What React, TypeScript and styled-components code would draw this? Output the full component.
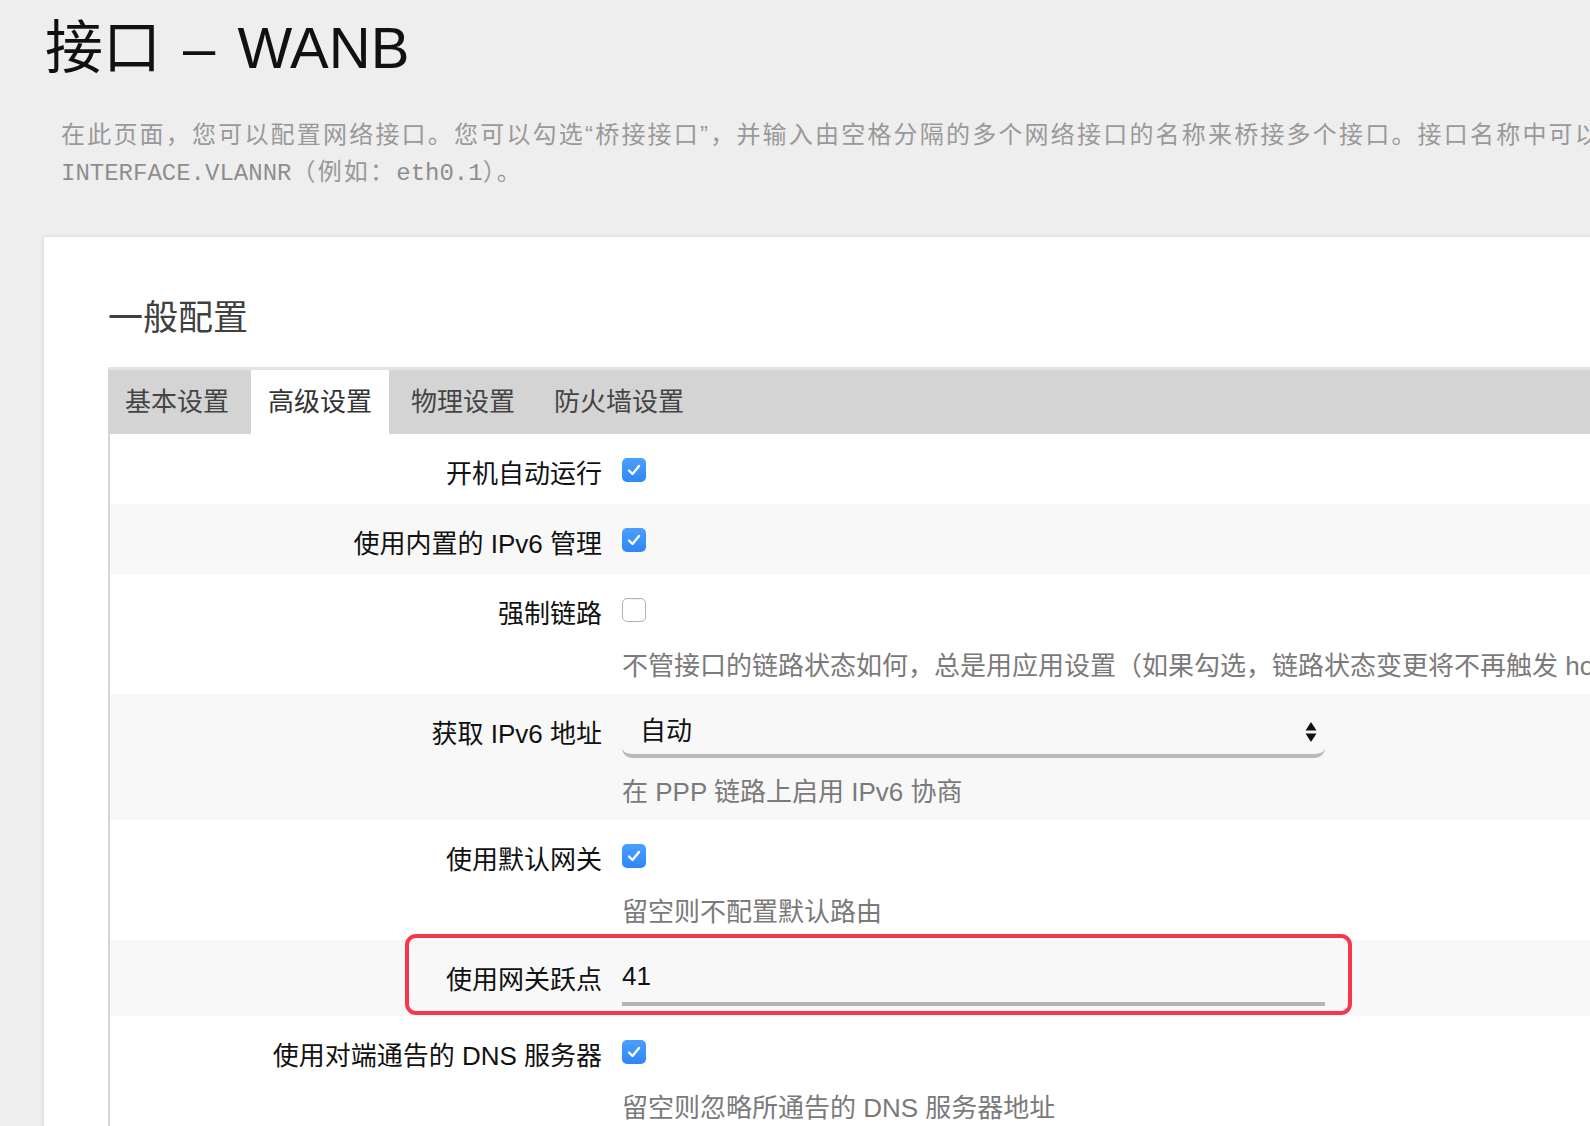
import React from 'react'
import styled, { createGlobalStyle } from 'styled-components'

const sans = `"Liberation Sans", "Noto Sans CJK SC", sans-serif`

type Field = {
  label: string
  kind: 'check' | 'select' | 'input'
  checked?: boolean
  value?: string
  hint?: string
  marked?: boolean
}

const tabs = ['基本设置', '高级设置', '物理设置', '防火墙设置']

const fields: Field[] = [
  { label: '开机自动运行', kind: 'check', checked: true },
  { label: '使用内置的 IPv6 管理', kind: 'check', checked: true },
  {
    label: '强制链路',
    kind: 'check',
    checked: false,
    hint: '不管接口的链路状态如何，总是用应用设置（如果勾选，链路状态变更将不再触发 hotplug 事件处理程序）',
  },
  { label: '获取 IPv6 地址', kind: 'select', value: '自动', hint: '在 PPP 链路上启用 IPv6 协商' },
  { label: '使用默认网关', kind: 'check', checked: true, hint: '留空则不配置默认路由' },
  { label: '使用网关跃点', kind: 'input', value: '41', marked: true },
  { label: '使用对端通告的 DNS 服务器', kind: 'check', checked: true, hint: '留空则忽略所通告的 DNS 服务器地址' },
]

const App = () => {
  return (
    <Page>
      <GlobalStyle />
      <Title>接口 – WANB</Title>
      <Intro>
        <IntroLine>
          在此页面，您可以配置网络接口。您可以勾选“桥接接口”，并输入由空格分隔的多个网络接口的名称来桥接多个接口。接口名称中可以使用 VLAN 记号
        </IntroLine>
        <IntroLine>
          <Mono>INTERFACE.VLANNR</Mono>（例如：<Mono>eth0.1</Mono>）。
        </IntroLine>
      </Intro>
      <Card>
        <Heading>一般配置</Heading>
        <TabBar>
          {tabs.map((t) => (
            <Tab key={t} $active={t === '高级设置'}>{t}</Tab>
          ))}
        </TabBar>
        <Panel>
          {fields.map((f, i) => (
            <Row key={f.label} $alt={i % 2 === 1}>
              {f.marked && <Mark />}
              <Label>{f.label}</Label>
              <Control>
                {f.kind === 'check' && (
                  <CheckLine>
                    <Check $on={!!f.checked}>
                      {f.checked && (
                        <svg width="14" height="12" viewBox="0 0 14 12">
                          <path d="M2 6.5 L5.5 10 L12 2" fill="none" stroke="#fff" strokeWidth="2.4" strokeLinecap="round" strokeLinejoin="round" />
                        </svg>
                      )}
                    </Check>
                  </CheckLine>
                )}
                {f.kind === 'select' && (
                  <Select>
                    <span>{f.value}</span>
                    <svg width="12" height="22" viewBox="0 0 12 22">
                      <path d="M6 1 L11.5 9.5 H0.5 Z" fill="#111" />
                      <path d="M6 21 L11.5 12.5 H0.5 Z" fill="#111" />
                    </svg>
                  </Select>
                )}
                {f.kind === 'input' && <Input>{f.value}</Input>}
                {f.hint && <Hint $loose={f.kind === 'select'}>{f.hint}</Hint>}
              </Control>
            </Row>
          ))}
        </Panel>
      </Card>
    </Page>
  )
}

export default App

const GlobalStyle = createGlobalStyle`
  html, body {
    margin: 0;
    padding: 0;
    background: #eeeeee;
    overflow: hidden;
  }
  body {
    font-family: ${sans};
  }
`
const Page = styled.div`
  width: 1800px;
  padding: 14px 0 0 44px;
`
const Title = styled.h1`
  margin: 0 0 0 1px;
  font-size: 58px;
  line-height: 67px;
  font-weight: 400;
  word-spacing: 6px;
  color: #111;
`
const Intro = styled.div`
  margin: 35px 0 0 17px;
  font-size: 24px;
  letter-spacing: 2.2px;
  line-height: 37px;
  color: #999;
`
const IntroLine = styled.div`
  white-space: nowrap;
`
const Mono = styled.span`
  font-family: "Liberation Mono", monospace;
  font-size: 24px;
  letter-spacing: 0;
  color: #8e8e8e;
`
const Card = styled.div`
  margin-top: 45px;
  background: #fff;
  box-shadow: 0 0 4px rgba(0, 0, 0, 0.14);
  padding: 56px 0 200px 64px;
`
const Heading = styled.h2`
  margin: 0 0 25px;
  font-size: 35px;
  line-height: 49px;
  font-weight: 400;
  color: #404040;
`
const TabBar = styled.div`
  display: flex;
  gap: 5px;
  background: #d4d4d4;
  border-top: 3px solid #e4e4e4;
`
const Tab = styled.div<{ $active?: boolean }>`
  padding: 0 17px;
  line-height: 64px;
  font-size: 26px;
  color: ${(p) => (p.$active ? '#333' : '#444')};
  background: ${(p) => (p.$active ? '#fff' : 'transparent')};
`
const Panel = styled.div`
  border-left: 2px solid #d6d6d6;
`
const Row = styled.div<{ $alt?: boolean }>`
  position: relative;
  display: grid;
  grid-template-columns: 492px 703px;
  column-gap: 20px;
  padding: 20px 0 10px;
  background: ${(p) => (p.$alt ? '#f8f8f8' : '#fff')};
`
const Mark = styled.div`
  position: absolute;
  left: 295px;
  top: -6px;
  width: 947px;
  height: 81px;
  box-sizing: border-box;
  border: 4px solid #f7374c;
  border-radius: 11px;
  pointer-events: none;
`
const Label = styled.div`
  text-align: right;
  font-size: 26px;
  line-height: 40px;
  color: #111;
  white-space: nowrap;
`
const Control = styled.div`
  display: flex;
  flex-direction: column;
  align-items: flex-start;
  min-height: 40px;
`
const CheckLine = styled.div`
  height: 40px;
  display: flex;
  align-items: flex-start;
`
const Check = styled.div<{ $on: boolean }>`
  width: 24px;
  height: 24px;
  margin-top: 4px;
  box-sizing: border-box;
  border-radius: 5px;
  display: flex;
  align-items: center;
  justify-content: center;
  background: ${(p) => (p.$on ? 'linear-gradient(#4aa0fb, #2f86f5)' : '#fff')};
  border: ${(p) => (p.$on ? 'none' : '1px solid #b4b4b4')};
  box-shadow: ${(p) => (p.$on ? 'none' : 'inset 0 1px 1px rgba(0,0,0,0.06)')};
`
const Select = styled.div`
  width: 100%;
  height: 44px;
  box-sizing: border-box;
  padding: 0 8px 0 18px;
  display: flex;
  align-items: flex-start;
  justify-content: space-between;
  line-height: 34px;
  border-bottom: 4px solid #b9b9b9;
  border-radius: 0 0 10px 10px;
  font-size: 26px;
  color: #111;
  svg {
    margin-top: 7px;
  }
`
const Input = styled.div`
  width: 100%;
  height: 46px;
  box-sizing: border-box;
  padding-bottom: 10px;
  border-bottom: 4px solid #b5b5b5;
  font-size: 26px;
  line-height: 32px;
  color: #111;
`
const Hint = styled.div<{ $loose?: boolean }>`
  margin-top: ${(p) => (p.$loose ? '16px' : '14px')};
  font-size: 26px;
  line-height: 36px;
  color: #7a7a7a;
  white-space: nowrap;
`
